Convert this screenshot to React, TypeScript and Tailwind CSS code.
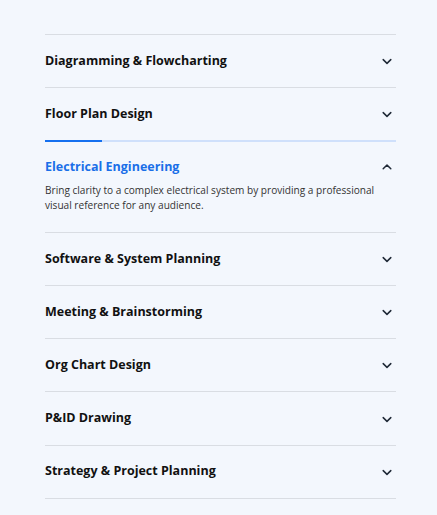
import React from "react";

const items = [
  "Diagramming & Flowcharting",
  "Floor Plan Design",
  "Electrical Engineering",
  "Software & System Planning",
  "Meeting & Brainstorming",
  "Org Chart Design",
  "P&ID Drawing",
  "Strategy & Project Planning",
];

function Chevron({ up }: { up?: boolean }) {
  return (
    <svg width="12" height="12" viewBox="0 0 12 12" fill="none" className="shrink-0">
      {up ? (
        <path d="M2.2 7.8L6 4L9.8 7.8" stroke="#1f2937" strokeWidth="1.5" strokeLinecap="round" strokeLinejoin="round" />
      ) : (
        <path d="M2.2 4.6L6 8.4L9.8 4.6" stroke="#1f2937" strokeWidth="1.5" strokeLinecap="round" strokeLinejoin="round" />
      )}
    </svg>
  );
}

export default function App() {
  return (
    <div
      className="min-h-[515px] w-full bg-[#f3f7fd] pt-[34px]"
      style={{ fontFamily: '"Open Sans", "Liberation Sans", sans-serif' }}
    >
      <div className="ml-[45px] w-[351px] border-b border-[#d9dde3]">
        {items.map((t) =>
          t === "Electrical Engineering" ? (
            <div key={t}>
              <div className="h-[2px] bg-[#cfe0fb]">
                <div className="h-[2px] w-[57px] bg-[#1570ef]" />
              </div>
              <div className="pt-[16px] pb-[19px]">
                <div className="flex h-[18px] items-center justify-between pr-[3px]">
                  <span className="text-[12.5px] font-bold text-[#1a6fe8]">{t}</span>
                  <Chevron up />
                </div>
                <p className="mt-[7px] whitespace-nowrap text-[10.1px] leading-[15px] text-[#333]">
                  Bring clarity to a complex electrical system by providing a professional
                  <br />
                  visual reference for any audience.
                </p>
              </div>
            </div>
          ) : (
            <div key={t} className="border-t border-[#d9dde3]">
              <div className="flex h-[52.1px] items-center justify-between pr-[3px]">
                <span className="text-[12.5px] font-bold text-[#111]">{t}</span>
                <Chevron />
              </div>
            </div>
          )
        )}
      </div>
    </div>
  );
}
